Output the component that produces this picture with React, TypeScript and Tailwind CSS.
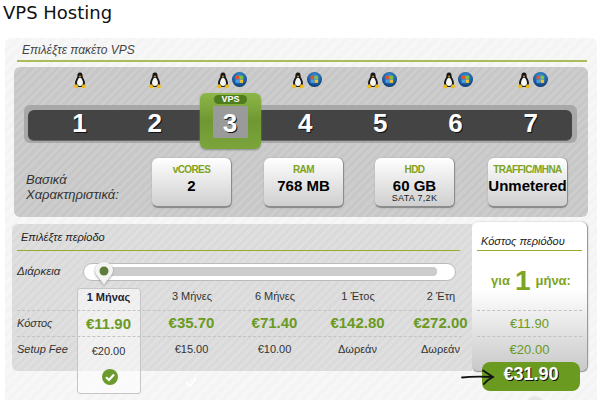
import React from "react";

const packs = [
  { n: "1", win: false },
  { n: "2", win: false },
  { n: "3", win: true },
  { n: "4", win: true },
  { n: "5", win: true },
  { n: "6", win: true },
  { n: "7", win: true },
];

const periods = [
  { label: "1 Μήνας", cost: "€11.90", fee: "€20.00" },
  { label: "3 Μήνες", cost: "€35.70", fee: "€15.00" },
  { label: "6 Μήνες", cost: "€71.40", fee: "€10.00" },
  { label: "1 Έτος", cost: "€142.80", fee: "Δωρεάν" },
  { label: "2 Έτη", cost: "€272.00", fee: "Δωρεάν" },
];

const Penguin = () => (
  <svg width="14" height="17" viewBox="0 0 14 17" className="shrink-0">
    <path d="M7 0.5C4.8 0.5 4.3 2.4 4.4 4.2C4.5 5.6 2 8 2 11C2 13.5 4 15 7 15C10 15 12 13.5 12 11C12 8 9.5 5.6 9.6 4.2C9.7 2.4 9.2 0.5 7 0.5Z" fill="#16161a" />
    <path d="M7 5.5C5.6 6 4 8.8 4 11C4 13 5.4 14 7 14C8.6 14 10 13 10 11C10 8.8 8.4 6 7 5.5Z" fill="#f7f7f2" />
    <path d="M5.6 3.8L8.4 3.8L7 5.4Z" fill="#e8ad14" />
    <path d="M0.5 14.2C1.5 12.8 3 12.2 4 12.5C5 13.5 5.4 15 5 16C3.5 16.8 1.5 15.8 0.5 14.2Z" fill="#f0bb12" />
    <path d="M13.5 14.2C12.5 12.8 11 12.2 10 12.5C9 13.5 8.6 15 9 16C10.5 16.8 12.5 15.8 13.5 14.2Z" fill="#f0bb12" />
  </svg>
);

const WinOrb = () => (
  <svg width="15" height="15" viewBox="0 0 15 15" className="shrink-0">
    <defs>
      <radialGradient id="orb" cx="50%" cy="35%" r="65%">
        <stop offset="0%" stopColor="#4aa0e0" />
        <stop offset="70%" stopColor="#1a5a9e" />
        <stop offset="100%" stopColor="#0c3468" />
      </radialGradient>
    </defs>
    <circle cx="7.5" cy="7.5" r="7.5" fill="url(#orb)" />
    <rect x="3.6" y="3.8" width="3.5" height="3.3" fill="#e8502a" />
    <rect x="7.6" y="3.8" width="3.5" height="3.3" fill="#7cc23a" />
    <rect x="3.6" y="7.6" width="3.5" height="3.3" fill="#4a9be8" />
    <rect x="7.6" y="7.6" width="3.5" height="3.3" fill="#f2c230" />
  </svg>
);

const SpecCard = ({ title, value, sub, className }: { title: string; value: string; sub?: string; className: string }) => (
  <div className={`${className} w-[80px] h-[50px] rounded-md bg-gradient-to-b from-white to-[#cfcfcf] border-b-2 border-r border-[#8c8c8c] flex flex-col items-center pt-[6px] text-center shadow-[0_0_2px_#aaa]`}>
    <div className="text-[10px] tracking-[-0.6px] leading-[12px] font-bold text-[#7fa320] whitespace-nowrap">{title}</div>
    <div className="mt-[1px] text-[15px] leading-[17px] font-bold text-black whitespace-nowrap">{value}</div>
    {sub && <div className="text-[9px] tracking-[0.3px] leading-[8px] text-[#222] whitespace-nowrap">{sub}</div>}
  </div>
);

export default function App() {
  return (
    <div className="relative w-[600px] h-[400px] overflow-hidden bg-white font-['Liberation_Sans',Arial,sans-serif]">
      <h1 className="h-[38px] pl-[3px] text-[18px] leading-[25px] text-[#111] font-['DejaVu_Sans',sans-serif]">VPS Hosting</h1>

      <div className="ml-[5px] w-[592px] h-[362px] rounded-t-md pl-[7px] bg-[repeating-linear-gradient(135deg,#f4f4f4_0,#f4f4f4_4px,#f7f7f7_4px,#f7f7f7_8px)]">
        {/* paketo */}
        <div className="ml-[5px] w-[570px] h-[24px] border-b-2 border-[#a9bd5a] pl-[5px] text-[12px] leading-[24px] italic text-[#444]">
          Επιλέξτε πακέτο VPS
        </div>
        <div className="relative ml-[2px] mt-[5px] w-[574px] h-[150px] rounded-md bg-[repeating-linear-gradient(135deg,#c7c7c7_0,#c7c7c7_3px,#cdcdcd_3px,#cdcdcd_6px)]">
          <div className="grid grid-cols-[repeat(7,75.2px)] pl-[27px] pt-[5px] h-[38px]">
            {packs.map((p) => (
              <div key={p.n} className={p.win ? "flex justify-center items-start gap-[2px] pl-[5px]" : "flex justify-center items-start pl-[3px]"}>
                <Penguin />
                {p.win && <WinOrb />}
              </div>
            ))}
          </div>
          <div className="ml-[10px] w-[553px] h-[38px] rounded-md bg-[#a8a8a8] pt-[5px] pl-[4px]">
            <div className="w-[544px] h-[31px] rounded-md bg-[#444] border-b border-[#666] pl-[14px] grid grid-cols-[repeat(7,75.2px)]">
              {packs.map((p) => (
                <div key={p.n} className="relative z-10 text-center text-[26px] leading-[27px] font-bold text-white [text-shadow:1px_1px_0_#111]">
                  {p.n}
                </div>
              ))}
            </div>
          </div>
          {/* selected pack */}
          <div className="absolute left-[186px] top-[26px] w-[61px] h-[56px] rounded-md bg-gradient-to-b from-[#8db648] via-[#6f9833] to-[#7ba53b] shadow-[0_1px_2px_#888] flex flex-col items-center pt-[2px]">
            <div className="w-[33px] h-[9px] rounded-full bg-[#4f7d1d] text-white text-[9px] leading-[9px] font-bold text-center">VPS</div>
            <div className="mt-[2px] w-[35px] h-[32px] bg-[#9a9a9a]" />
          </div>

          <div className="flex mt-[15px] items-start">
            <div className="ml-[12px] w-[94px] pt-[14px] text-[13px] leading-[15px] italic text-[#333] whitespace-nowrap">
              Βασικά
              <br />
              Χαρακτηριστικά:
            </div>
            <SpecCard className="ml-[32px]" title="vCORES" value="2" />
            <SpecCard className="ml-[32px]" title="RAM" value="768 MB" />
            <SpecCard className="ml-[31px]" title="HDD" value="60 GB" sub="SATA 7,2K" />
            <SpecCard className="ml-[33px]" title="TRAFFIC/MHNA" value="Unmetered" />
          </div>
        </div>

        <div className="flex items-start mt-[5px]">
          {/* periodos */}
          <div className="relative mt-[2px] w-[460px] h-[147px] rounded-l-md bg-[repeating-linear-gradient(135deg,#dadada_0,#dadada_3px,#dfdfdf_3px,#dfdfdf_6px)] pl-[5px]">
            <div className="w-[443px] h-[27px] border-b border-[#93ad2f] pl-[4px] text-[11px] leading-[27px] italic text-[#222]">
              Επιλέξτε περίοδο
            </div>
            <div className="flex items-center h-[18px] mt-[12px]">
              <div className="w-[66px] text-[11.5px] italic text-[#333]">Διάρκεια</div>
              <div className="w-[373px] h-[18px] rounded-full bg-white border border-[#bbb] pl-[16px] pt-[3px]">
                <div className="w-[337px] h-[9px] rounded-r-sm bg-[#cccccc]" />
              </div>
            </div>
            {/* slider pin */}
            <svg width="20" height="26" viewBox="0 0 20 26" className="absolute left-[82px] top-[37px] z-20 drop-shadow-[0_1px_1px_#999]">
              <path d="M10 1C5 1 1 5 1 9.5C1 14 6 17 10 24C14 17 19 14 19 9.5C19 5 15 1 10 1Z" fill="#f4f4f4" />
              <circle cx="10" cy="10" r="4.5" fill="#5f7b3c" />
            </svg>

            {/* selected period card */}
            <div className="absolute left-[65px] top-[64px] w-[64px] h-[106px] rounded-[3px] bg-white/55 border border-[#c6c6c6]" />

            <div className="relative z-10 mt-[7px] w-[445px] grid grid-cols-[50px_repeat(5,83px)] h-[22px] items-start pt-[1px] text-[11px] leading-[14px] text-[#333] text-center">
              <div />
              {periods.map((p, i) => (
                <div key={p.label} className={i === 0 ? "pt-[1px] font-bold text-[#223]" : "pl-[1px]"}>{p.label}</div>
              ))}
            </div>
            <div className="relative z-10 w-[445px] grid grid-cols-[50px_repeat(5,83px)] h-[26px] items-center border-t border-dashed border-[#c2c2c2] text-center">
              <div className="text-left text-[11px] italic text-[#333]">Κόστος</div>
              {periods.map((p, i) => (
                <div key={p.cost} className={i === 0 ? "pt-[2px] text-[15px] font-bold text-[#6a9a1f] whitespace-nowrap" : "text-[15px] font-bold text-[#6a9a1f] whitespace-nowrap"}>{p.cost}</div>
              ))}
            </div>
            <div className="relative z-10 w-[445px] grid grid-cols-[50px_repeat(5,83px)] h-[26px] items-center border-t border-dashed border-[#c2c2c2] text-center text-[11px] text-[#333]">
              <div className="text-left italic whitespace-nowrap">Setup Fee</div>
              {periods.map((p, i) => (
                <div key={p.cost} className={i === 0 ? "pt-[3px]" : ""}>{p.fee}</div>
              ))}
            </div>
            {/* check marks */}
            <svg width="16" height="16" viewBox="0 0 16 16" className="absolute left-[90px] top-[145px] z-20">
              <circle cx="8" cy="8" r="8" fill="#6d9a2e" />
              <path d="M4 8.3L7 11L12 5.5" fill="none" stroke="#fff" strokeWidth="2.2" />
            </svg>
            <svg width="14" height="12" viewBox="0 0 14 12" className="absolute left-[172px] top-[152px] z-20">
              <path d="M2 6L6 10L12 2" fill="none" stroke="#fff" strokeWidth="2" />
            </svg>
          </div>

          {/* kostos */}
          <div className="w-[116px] h-[150px] rounded-md border-b border-r border-[#999] bg-gradient-to-b from-white from-45% to-[#c9c9c9] shadow-[0_0_2px_#bbb] px-[5px]">
            <div className="h-[29px] border-b border-[#93ad2f] pl-[4px] pt-[11px] text-[11px] leading-[16px] italic text-[#222] whitespace-nowrap">
              Κόστος περιόδου
            </div>
            <div className="h-[59px] flex justify-center items-center gap-[5px] pl-[3px] font-bold text-[#7ca51f] text-[13px] whitespace-nowrap">
              για <span className="text-[28px] leading-[28px]">1</span> μήνα:
            </div>
            <div className="h-[26px] border-t border-dashed border-[#c2c2c2] flex items-center justify-center text-[13px] text-[#6a9a1f]">€11.90</div>
            <div className="h-[26px] border-t border-dashed border-[#c2c2c2] flex items-center justify-center text-[13px] text-[#6a9a1f]">€20.00</div>
          </div>
        </div>
      </div>

      {/* total */}
      <div className="absolute left-[482px] top-[362px] w-[98px] h-[29px] rounded-lg bg-[#6a9a20] text-center text-[18px] leading-[24px] font-bold text-white [text-shadow:1px_1px_0_#111] z-20">
        €31.90
      </div>
      <svg width="34" height="16" viewBox="0 0 34 16" className="absolute left-[461px] top-[369px] z-30">
        <path d="M1 8.5C10 7.5 20 7.5 32 8M22 1.5C25 3.5 29 6 32 8C28 10 25 12.5 23 15" fill="none" stroke="#111" strokeWidth="1.8" strokeLinecap="round" />
      </svg>
      <div className="absolute left-[526px] top-[396px] w-[18px] h-[18px] rounded-full bg-[#e6e6e6]" />
    </div>
  );
}
